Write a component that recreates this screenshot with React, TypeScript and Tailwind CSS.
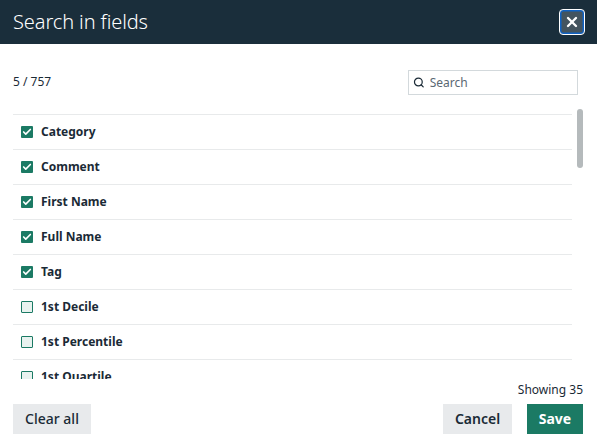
import { Check, Search, X } from 'lucide-react';

const fields = [
  { name: 'Category', checked: true },
  { name: 'Comment', checked: true },
  { name: 'First Name', checked: true },
  { name: 'Full Name', checked: true },
  { name: 'Tag', checked: true },
  { name: '1st Decile', checked: false },
  { name: '1st Percentile', checked: false },
  { name: '1st Quartile', checked: false },
];

function FieldRow({ name, checked }: { name: string; checked: boolean }) {
  return (
    <div className="flex h-[35px] shrink-0 items-center gap-2 border-t border-[#e8eaeb] pl-2">
      {checked ? (
        <span className="flex h-3 w-3 items-center justify-center rounded-[1px] bg-[#1b7a64] text-white">
          <Check className="h-[10px] w-[10px]" strokeWidth={4} />
        </span>
      ) : (
        <span className="h-3 w-3 rounded-[1px] border border-[#1b7a64] bg-[#e8f2ef]" />
      )}
      <span className="text-xs font-bold text-[#1a2a36]">{name}</span>
    </div>
  );
}

export default function App() {
  return (
    <div className="flex h-[448px] w-[597px] flex-col overflow-hidden bg-white font-['Noto_Sans',sans-serif] text-[#1a2a36]">
      <header className="flex h-11 shrink-0 items-center justify-between bg-[#1a2e3b] pl-[13px] pr-3">
        <h1 className="text-xl font-light tracking-[-0.1px] text-white">Search in fields</h1>
        <button className="flex h-[26px] w-[26px] items-center justify-center rounded-[4px] border border-white bg-[#44545f] text-white shadow-[inset_0_0_0_1.5px_#0f62c4]">
          <X className="h-4 w-4" strokeWidth={3.5} />
        </button>
      </header>

      <div className="flex flex-1 flex-col pl-[13px] pr-[14px]">
        <div className="flex items-center justify-between pr-[5px] pt-[26px]">
          <span className="-mt-[2px] text-xs">5 / 757</span>
          <div className="flex h-[25px] w-[170px] items-center gap-[5px] border border-[#d3d9dc] pl-[4px]">
            <Search className="h-[13px] w-[13px] text-[#1a2a36]" strokeWidth={2.5} />
            <input
              placeholder="Search"
              className="w-full bg-transparent text-xs outline-none placeholder:text-[#5a6873]"
            />
          </div>
        </div>

        <div className="mt-[14px] flex h-[270px] gap-[5px]">
          <div className="flex flex-1 flex-col overflow-hidden pt-[5px]">
            {fields.map((f) => (
              <FieldRow key={f.name} name={f.name} checked={f.checked} />
            ))}
          </div>
          <div className="w-[6px] shrink-0">
            <div className="h-[59px] rounded-[3px] bg-[#b5babc]" />
          </div>
        </div>

        <div className="mt-[3px] text-right text-xs leading-[16px]">Showing 35</div>

        <div className="mt-[6px] flex items-center justify-between">
          <button className="h-[30px] w-[78px] bg-[#e8eaec] text-sm font-medium">Clear all</button>
          <div className="flex gap-[15px]">
            <button className="h-[30px] w-[69px] bg-[#e8eaec] text-sm font-semibold">Cancel</button>
            <button className="h-[30px] w-[56px] bg-[#1b7a64] text-sm font-bold text-white">Save</button>
          </div>
        </div>
      </div>
    </div>
  );
}
